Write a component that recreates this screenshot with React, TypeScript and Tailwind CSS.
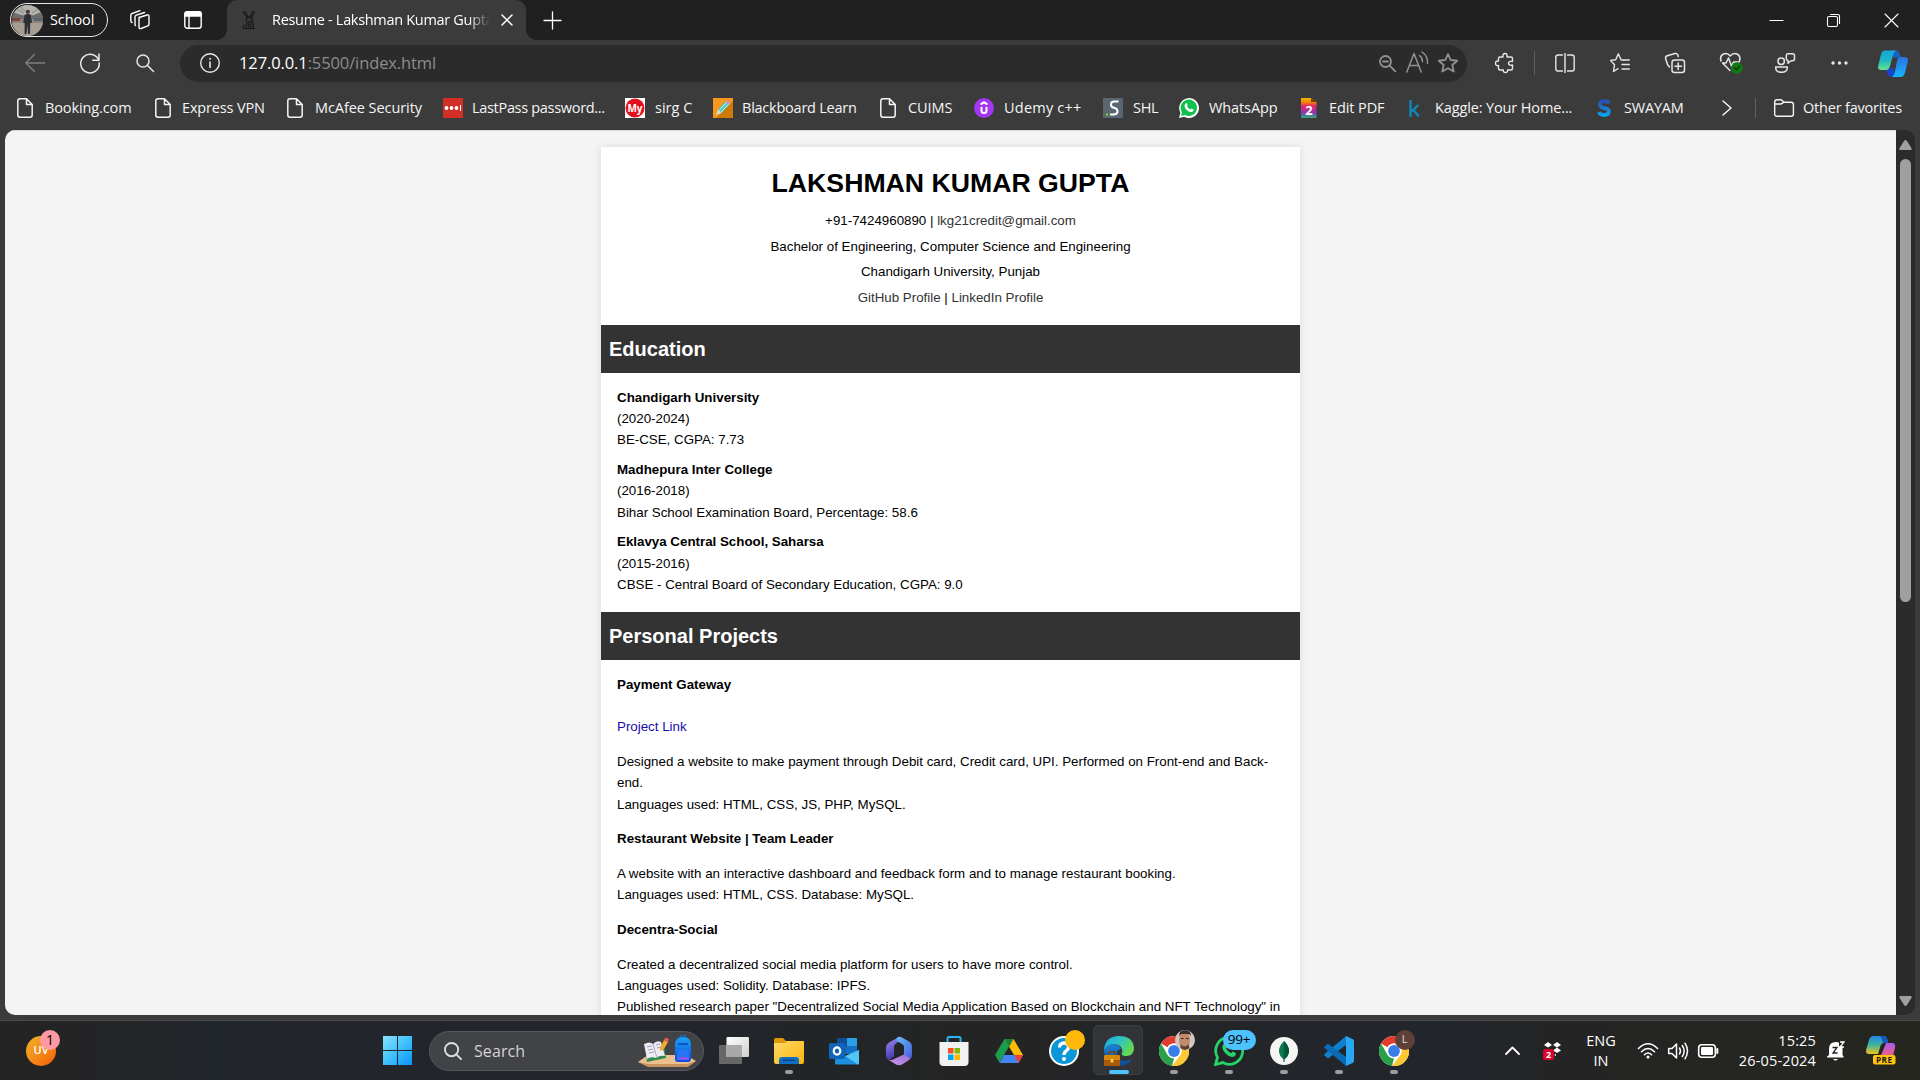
import type { ReactNode } from "react";

const UI = "font-['Open_Sans','Noto_Sans',sans-serif]";

function Ico({ c = "", vb = "0 0 20 20", w = 1.4, children }: { c?: string; vb?: string; w?: number; children: ReactNode }) {
  return (
    <svg className={`block shrink-0 overflow-visible ${c}`} viewBox={vb} fill="none" stroke="currentColor" strokeWidth={w} strokeLinecap="round" strokeLinejoin="round">
      {children}
    </svg>
  );
}

/* ---------- Tab strip ---------- */

function Avatar() {
  return (
    <svg className="block size-[31px] shrink-0" viewBox="0 0 31 31">
      <defs>
        <clipPath id="av"><circle cx="15.5" cy="15.5" r="15.5" /></clipPath>
      </defs>
      <g clipPath="url(#av)">
        <rect width="31" height="31" fill="#8d857a" />
        <rect width="31" height="10" fill="#b4b2ac" />
        <path d="M0 7l12 4v3H0zM31 6l-11 5v3h11z" fill="#6a6d6d" />
        <path d="M3 3l9 5M28 3l-8 5M7 1l6 5" stroke="#7f7f7b" strokeWidth=".8" />
        <rect y="13" width="8" height="3" fill="#823f3b" />
        <rect x="22" y="13" width="9" height="3" fill="#59656b" />
        <path d="M0 18h31v13H0z" fill="#a79d90" />
        <circle cx="15.800" cy="6.800" r="2.100" fill="#4a3a33" />
        <path d="M12.500 10q3.300-2 6.600 0l.8 8h-1.700l-.2 11h-2l-.5-9-1 9h-2l.2-11h-1.500z" fill="#2f3036" />
      </g>
    </svg>
  );
}

function TabStrip() {
  return (
    <div className="flex h-10 w-full shrink-0 items-center bg-[#202020] text-white">
      <div className="ml-[10px] flex h-[34px] w-[98px] shrink-0 items-center rounded-full border-[1.500px] border-[#e8e8e8] pl-px text-[14.500px]">
        <Avatar />
        <span className="ml-[7px] tracking-[-0.1px]">School</span>
      </div>
      <Ico c="ml-[22px] size-5" w={1.4}>
        <path d="M9 7.500L17 5q2-.6 2 1.300v8q0 1.200-1.200 1.600L11 18.500q-2 .5-2-1.300V9q0-1.200 1-1.500M5.500 15.500Q5 15 5 14V7q0-1.400 1.300-1.900L14.500 2.500M2 12.500q-1.200-.5-1.200-1.700V5.500q0-1.500 1.300-2L10 .7" />
      </Ico>
      <Ico c="ml-[34px] h-[18px] w-[18px]" vb="0 0 18 18">
        <rect x=".8" y=".8" width="16.400" height="16.400" rx="2.500" />
        <path d="M1 2.500Q1 1 2.500 1h13Q17 1 17 2.500V5H1z" fill="currentColor" />
        <path d="M5 5v12" />
      </Ico>
      <div className="relative ml-[25px] flex h-10 w-[299px] shrink-0 items-center rounded-t-[10px] bg-[#3b3b3b]">
        <div className="absolute bottom-0 -left-[10px] size-[10px] bg-[radial-gradient(circle_at_0_0,transparent_9.500px,#3b3b3b_10px)]" />
        <div className="absolute -right-[10px] bottom-0 size-[10px] bg-[radial-gradient(circle_at_100%_0,transparent_9.500px,#3b3b3b_10px)]" />
        <Ico c="ml-[15px] h-5 w-[14px] text-[#161616]" vb="0 0 15 20" w={1.100}>
          <path d="M6 8L1.500 2Q2 .2 3.500 1.500L7 7M9 7l2-5.500Q13 0 13 2l-3 6" />
          <ellipse cx="7.800" cy="10" rx="3.500" ry="3" />
          <path d="M6.500 9.700v.3M9.500 9.700v.3M7.300 11.500h1" />
          <path d="M6 12.700q-2.500 3-.5 6.500h6q2-3.500-.5-6.500M3 16q-2 0-2 1.700T3.500 19.200H13" />
          <circle cx="8.500" cy="16" r="1.600" />
        </Ico>
        <div className="ml-[16px] w-[219px] overflow-hidden text-[14.500px] tracking-[-0.31px] whitespace-nowrap [mask-image:linear-gradient(to_right,black_196px,transparent_218px)]">
          Resume - Lakshman Kumar Gupta
        </div>
        <Ico c="ml-[11px] size-[10px]" vb="0 0 10 10" w={1.500}>
          <path d="M0 0l10 10M10 0L0 10" />
        </Ico>
      </div>
      <Ico c="ml-[18px] size-[17px]" vb="0 0 17 17" w={1.300}>
        <path d="M8.500 0v17M0 8.500h17" />
      </Ico>
      <div className="flex-1" />
      <Ico c="size-[13px]" vb="0 0 13 13" w={1.200}><path d="M0 6.500h13" /></Ico>
      <Ico c="ml-[44px] size-[13px]" vb="0 0 13 13" w={1.100}>
        <rect x=".5" y="2.500" width="10" height="10" rx="1.500" />
        <path d="M3.500.5H11q1.500 0 1.500 1.500V9.500" />
      </Ico>
      <Ico c="mr-[22px] ml-[45px] size-[13px]" vb="0 0 13 13" w={1.100}><path d="M0 0l13 13M13 0L0 13" /></Ico>
    </div>
  );
}

/* ---------- Address bar ---------- */

function EdgeCopilot() {
  return (
    <svg className="block h-[27px] w-[30px] shrink-0" viewBox="0 0 30 27">
      <defs>
        <linearGradient id="ec1" x1="0" y1="0" x2="0" y2="1"><stop stopColor="#18a5d8" /><stop offset=".5" stopColor="#1cb7c4" /><stop offset="1" stopColor="#6be08e" /></linearGradient>
        <linearGradient id="ec2" x1="0" y1="0" x2="0" y2="1"><stop stopColor="#2b6fe0" /><stop offset="1" stopColor="#15b9fd" /></linearGradient>
      </defs>
      <path d="M14 .500h4q2.500 0 3.500 3l1.300 4H15z" fill="#1462c8" />
      <path d="M8 19l7-1 3 8.500h-5q-3 0-4-4z" fill="#1546d2" />
      <path d="M7 .500h11q-2 1-3 4.500L12 16q-1 4-4 4H3Q-.8 20 .3 15.500L3 4.500Q4 .500 7 .500z" fill="url(#ec1)" />
      <path d="M21 7h6q4 0 2.800 4.500L27 22.500q-1.200 4.500-4.500 4.500H14q2-1 2.800-4.500L19 11q.8-3 2-4z" fill="url(#ec2)" />
    </svg>
  );
}

function AddressRow() {
  return (
    <div className="flex h-[46px] w-full shrink-0 items-center text-[#e6e6e6]">
      <Ico c="ml-[25px] size-5 text-[#7f7f7f]"><path d="M19.500 10H.7M9.500 1.500L.7 10l8.800 8.500" /></Ico>
      <Ico c="ml-[35px] size-5" w={1.500}><path d="M18.800 7.500A9.300 9.300 0 1 0 19.300 10M19 1v6.300h-6.300" /></Ico>
      <Ico c="ml-[36px] size-[18px]" vb="0 0 18 18" w={1.500}><circle cx="7" cy="7" r="6" /><path d="M11.500 11.500l6 6" /></Ico>
      <div className="ml-[26px] flex h-[37px] w-[1287px] shrink-0 items-center rounded-full bg-[#2b2b2b]">
        <Ico c="ml-5 size-5" w={1.400}>
          <circle cx="10" cy="10" r="9.300" />
          <path d="M10 9v5.500" strokeWidth="1.600" />
          <circle cx="10" cy="5.800" r=".6" fill="currentColor" strokeWidth=".8" />
        </Ico>
        <div className="ml-[19px] pt-px text-[16.500px] tracking-[-0.11px] whitespace-nowrap text-[#8d8d8d]">
          <span className="text-white">127.0.0.1</span>:5500/index.html
        </div>
        <div className="flex-1" />
        <div className="flex items-center text-[#929292]">
          <Ico c="size-[17px]" vb="0 0 17 17" w={1.800}><circle cx="6.500" cy="6.500" r="5.500" /><path d="M4 6.500h5M10.700 10.700l5.600 5.600" /></Ico>
          <Ico c="ml-[10px] h-[22px] w-[23px] -translate-y-px" vb="0 0 23 22" w={1.500}>
            <path d="M.8 21L8 2.500 15.200 21M3.500 14.500h9M13.500 4.500q3 2 3 6M16 1q6 4 5.500 11.500" />
          </Ico>
          <Ico c="mr-[9px] ml-[9px] size-5" w={1.800}><path d="M10 1l2.700 6 6.500.7-4.900 4.300 1.400 6.500L10 15.200 4.300 18.500l1.400-6.500L.8 7.700l6.500-.7z" /></Ico>
        </div>
      </div>
      <Ico c="ml-[28px] size-5"><path d="M5 4h3q-.6-3.500 2-3.500T12 4h4q1.500 0 1.500 1.500v3Q13.500 7.800 13.500 10.300T17.500 12v3.500q0 1.500-1.500 1.500h-3.500q.5 2.500-2 2.500T8.300 17H5q-1.500 0-1.500-1.500v-3Q.5 13 .5 10.300T3.500 8V5.500Q3.500 4 5 4z" /></Ico>
      <div className="ml-[19px] h-6 w-px shrink-0 bg-[#5e5e5e]" />
      <Ico c="ml-[20px] size-5"><path d="M7.500 2H3Q.8 2 .8 4.200v11.600Q.8 18 3 18h4.500M12.500 2H17q2.200 0 2.200 2.200v11.600Q19.200 18 17 18h-4.500M10 .500v19" /></Ico>
      <Ico c="ml-[35px] size-5">
        <path d="M14 7.300l-3-.5L8.300.8 5.700 6.800l-5.200.6 4 4.400-1 6.700 4.500-2.800M12 7h7.300M12 11.500h7.300M12 16h7.300" />
      </Ico>
      <Ico c="ml-[35px] size-5" w={1.500}>
        <rect x="7" y="7" width="12.500" height="12.500" rx="2.500" />
        <path d="M13.200 10v6.500M10 13.200h6.500M4.500 14L2.500 11.500.6 5.500Q.2 3.500 2.200 2.700L10 .500q2-.4 2.800 1.300l.5 1.700" />
      </Ico>
      <Ico c="ml-[35px] size-[22px]" vb="0 0 22 22" w={1.500}>
        <path d="M10 18.500L2.500 11H6l2.500-5 3 8 2-4h5.500M1 9Q-.5 4 3.500 2 7.500.500 10.200 4 13 .500 17 2q4 2 2.500 7" />
        <circle cx="17" cy="16" r="5.800" fill="#107c10" stroke="none" />
        <path d="M14.500 16l1.800 1.800 3.300-3.300" stroke="#0b3b0b" />
      </Ico>
      <Ico c="ml-[33px] size-5" w={1.500}>
        <circle cx="6.200" cy="8.200" r="3.200" />
        <path d="M.7 14h11.600q.3 5.300-5.800 5.300T.7 14zM12.500.7h5q2 0 2 2v3q0 2-2 2h-1.500l-3 2.600V7.500q-1.700-.3-1.700-1.800v-3q0-2 1.200-2z" />
      </Ico>
      <Ico c="ml-[36px] h-1 w-[17px]" vb="0 0 17 4">
        <g fill="currentColor" stroke="none"><circle cx="2" cy="2" r="1.700" /><circle cx="8.500" cy="2" r="1.700" /><circle cx="15" cy="2" r="1.700" /></g>
      </Ico>
      <div className="ml-[30px]"><EdgeCopilot /></div>
    </div>
  );
}

/* ---------- Bookmarks ---------- */

const FileIcon = () => (
  <Ico c="h-5 w-4" vb="0 0 16 20" w={1.500}>
    <path d="M9.500.8H3Q.8.800.8 3v14Q.8 19.200 3 19.200h10q2.200 0 2.200-2.200V6.500zM9.500.8v5.700h5.700" />
  </Ico>
);

const LastPass = () => (
  <svg className="block size-5" viewBox="0 0 20 20"><rect width="20" height="20" fill="#d32d27" /><g fill="#fff"><circle cx="3.500" cy="10" r="1.900" /><circle cx="8.500" cy="10" r="1.900" /><circle cx="13.500" cy="10" r="1.900" /><rect x="17" y="7" width="1" height="6" /></g></svg>
);
const MyLogo = () => (
  <svg className="block size-5" viewBox="0 0 20 20"><rect width="20" height="20" fill="#fff" /><circle cx="10" cy="10" r="9.500" fill="#e3101c" /><text x="10" y="14" fontSize="10" fontWeight="700" textAnchor="middle" fill="#fff">My</text></svg>
);
const Blackboard = () => (
  <svg className="block size-5" viewBox="0 0 20 20"><rect width="20" height="20" fill="#f7971d" /><path d="M20 3v17H3z" fill="#cf7a05" /><path d="M3 17l2-5.500L14 2l3.500 3.500-9 9.500z" fill="#45c8c4" /><path d="M14 2l3.500 3.500L16 7l-3.500-3.500z" fill="#e58ab0" /><path d="M6 12.500l7.500-8M8 14.300l7.500-8" stroke="#d8f2e8" /><path d="M3 17l2-5.500 3.500 3.500z" fill="#f1d9a8" /></svg>
);
const Udemy = () => (
  <svg className="block size-5" viewBox="0 0 20 20"><circle cx="10" cy="10" r="10" fill="#a435f0" /><path d="M6.500 6.500L10 4.300l3.500 2.200M7.500 9v3.500q0 2.500 2.500 2.500t2.500-2.500V9" fill="none" stroke="#fff" strokeWidth="2" /></svg>
);
const Shl = () => (
  <svg className="block size-5" viewBox="0 0 20 20"><rect width="20" height="20" fill="#5b6770" /><path d="M15.500 3.500H11q-3 0-3 3T11 9.800t3.500 3.200-3.500 3.500H7" fill="none" stroke="#fff" strokeWidth="2" /><circle cx="4" cy="16.500" r="1.200" fill="#7ed321" /></svg>
);
const WhatsAppMark = () => (
  <svg className="block size-5" viewBox="0 0 20 20"><path d="M0 20l1.400-5.200A9.900 9.900 0 1 1 5.300 18.700z" fill="#fff" /><path d="M2 18l1-3.700A8.200 8.200 0 1 1 6 17z" fill="#10c14c" /><path d="M7 5.300q.6-.5 1 .3l.7 1.600q.1.400-.7 1.400 1.200 2.200 3.400 3 .8-1.200 1.200-1l1.800.9q.4.200.1 1.100-.6 1.500-2.500 1.500-2.500-.2-4.500-2.400T5.500 8q0-1.700 1.500-2.700z" fill="#fff" /></svg>
);
const EditPdf = () => (
  <svg className="block h-5 w-4" viewBox="0 0 16 20">
    <defs><linearGradient id="pdf" x2="0" y2="1"><stop stopColor="#f5b400" /><stop offset=".2" stopColor="#f28a00" /><stop offset=".4" stopColor="#e5256e" /><stop offset=".75" stopColor="#8a3ab9" /><stop offset="1" stopColor="#23b573" /></linearGradient></defs>
    <path d="M0 0h10l5.500 4v16H0z" fill="url(#pdf)" /><path d="M10 0v4h5.500z" fill="#7a3b05" />
    <text x="8" y="16.500" fontSize="13" fontWeight="700" textAnchor="middle" fill="#fff">2</text>
  </svg>
);
const Kaggle = () => (
  <svg className="block h-[17px] w-[11px]" viewBox="0 0 11 17" fill="none" stroke="#0f88b8" strokeWidth="2.400"><path d="M1.500 0v17M9.300 5L2.500 11.500M4.500 10l5.300 6.500" /></svg>
);
const Swayam = () => (
  <svg className="block h-[18px] w-[14px]" viewBox="0 0 14 18" fill="none" strokeWidth="3.800">
    <defs><linearGradient id="sw" x2="0" y2="1"><stop stopColor="#2d4db2" /><stop offset="1" stopColor="#0fa0ea" /></linearGradient></defs>
    <path d="M12 4.500Q11 2 7.500 2 3 2 3 5.200T7.500 9t4.300 3.700T7.200 16Q3 16 2 13" stroke="url(#sw)" />
  </svg>
);

type Mark = { label: string; icon: ReactNode; slot: string; iconW: string; track: string };
const marks: Mark[] = [
  { label: "Booking.com", icon: <FileIcon />, slot: "w-[138px]", iconW: "w-[28px]", track: "tracking-[-0.12px]" },
  { label: "Express VPN", icon: <FileIcon />, slot: "w-[132px]", iconW: "w-[27px]", track: "tracking-[-0.15px]" },
  { label: "McAfee Security", icon: <FileIcon />, slot: "w-[156px]", iconW: "w-[28px]", track: "tracking-[-0.07px]" },
  { label: "LastPass password...", icon: <LastPass />, slot: "w-[182px]", iconW: "w-[29px]", track: "tracking-[-0.31px]" },
  { label: "sirg C", icon: <MyLogo />, slot: "w-[88px]", iconW: "w-[30px]", track: "tracking-[0px]" },
  { label: "Blackboard Learn", icon: <Blackboard />, slot: "w-[167px]", iconW: "w-[29px]", track: "tracking-[-0.24px]" },
  { label: "CUIMS", icon: <FileIcon />, slot: "w-[94px]", iconW: "w-[28px]", track: "tracking-[-0.1px]" },
  { label: "Udemy c++", icon: <Udemy />, slot: "w-[129px]", iconW: "w-[30px]", track: "tracking-[0.22px]" },
  { label: "SHL", icon: <Shl />, slot: "w-[76px]", iconW: "w-[30px]", track: "tracking-[-0.3px]" },
  { label: "WhatsApp", icon: <WhatsAppMark />, slot: "w-[122px]", iconW: "w-[30px]", track: "tracking-[-0.1px]" },
  { label: "Edit PDF", icon: <EditPdf />, slot: "w-[108px]", iconW: "w-[28px]", track: "tracking-[-0.1px]" },
  { label: "Kaggle: Your Home...", icon: <Kaggle />, slot: "w-[188px]", iconW: "w-[26px]", track: "tracking-[-0.13px]" },
  { label: "SWAYAM", icon: <Swayam />, slot: "w-[126px]", iconW: "w-[27px]", track: "tracking-[-0.2px]" },
];

function Bookmarks() {
  return (
    <div className="flex h-[44px] w-full shrink-0 items-center pl-[17px] text-[14.500px] whitespace-nowrap text-[#f5f5f5]">
      {marks.map((m) => (
        <div key={m.label} className={`flex shrink-0 items-center ${m.slot}`}>
          <div className={`shrink-0 ${m.iconW}`}>{m.icon}</div>
          <span className={m.track}>{m.label}</span>
        </div>
      ))}
      <Ico c="h-[14px] w-2" vb="0 0 8 14" w={1.500}><path d="M0 0l8 7L0 14" /></Ico>
      <div className="ml-[24px] h-5 w-px shrink-0 bg-[#626262]" />
      <Ico c="ml-[18px] h-[18px] w-5" vb="0 0 20 18" w={1.400}>
        <path d="M.7 5V3Q.7.700 3 .7h3.500q1 0 1.700.8l1.700 1.700h7.300q2.200 0 2.200 2.200v9.500q0 2.300-2.200 2.300H3Q.7 17.200.7 15zM.7 5h5.800q1 0 1.700-.7l1.700-1.100" />
      </Ico>
      <span className="ml-[9px] tracking-[-0.2px]">Other favorites</span>
    </div>
  );
}

/* ---------- Resume page ---------- */

const BarTitle = ({ children }: { children: ReactNode }) => (
  <h2 className="bg-[#333] p-[8px] text-[20px] leading-[32px] font-bold text-white">{children}</h2>
);

const schools = [
  ["Chandigarh University", "(2020-2024)", "BE-CSE, CGPA: 7.73"],
  ["Madhepura Inter College", "(2016-2018)", "Bihar School Examination Board, Percentage: 58.6"],
  ["Eklavya Central School, Saharsa", "(2015-2016)", "CBSE - Central Board of Secondary Education, CGPA: 9.0"],
];

function Resume() {
  return (
    <article className="mt-[16px] ml-[596px] h-[1200px] w-[699px] shrink-0 bg-white font-['Liberation_Sans',Arial,sans-serif] text-[13.330px] leading-[21.330px] text-black shadow-[0_0_8.300px_rgba(0,0,0,0.1)]">
      <header className="h-[178px] pt-[14.200px] text-center text-black">
        <h1 className="text-[26.670px] leading-[45px] font-bold">LAKSHMAN KUMAR GUPTA</h1>
        <div className="mt-[4.300px] flex flex-col gap-[4.170px]">
          <p>+91-7424960890 | <a className="text-[#333]">lkg21credit@gmail.com</a></p>
          <p>Bachelor of Engineering, Computer Science and Engineering</p>
          <p>Chandigarh University, Punjab</p>
          <p><a className="text-[#333]">GitHub Profile</a> | <a className="text-[#333]">LinkedIn Profile</a></p>
        </div>
      </header>
      <BarTitle>Education</BarTitle>
      <ul className="flex h-[239px] flex-col gap-[8.330px] px-[16px] pt-[13.600px]">
        {schools.map(([name, years, detail]) => (
          <li key={name}>
            <strong>{name}</strong>
            <p>{years}</p>
            <p>{detail}</p>
          </li>
        ))}
      </ul>
      <BarTitle>Personal Projects</BarTitle>
      <div className="flex flex-col gap-[13.330px] px-[16px] pt-[13.700px]">
        <p><strong>Payment Gateway</strong><br /><br /><a className="text-[#1a0dab]">Project Link</a></p>
        <p>Designed a website to make payment through Debit card, Credit card, UPI. Performed on Front-end and Back-<br />end.<br />Languages used: HTML, CSS, JS, PHP, MySQL.</p>
        <p><strong>Restaurant Website | Team Leader</strong></p>
        <p>A website with an interactive dashboard and feedback form and to manage restaurant booking.<br />Languages used: HTML, CSS. Database: MySQL.</p>
        <p><strong>Decentra-Social</strong></p>
        <p className="whitespace-nowrap">Created a decentralized social media platform for users to have more control.<br />Languages used: Solidity. Database: IPFS.<br />Published research paper "Decentralized Social Media Application Based on Blockchain and NFT Technology" in</p>
      </div>
    </article>
  );
}

function Viewport() {
  return (
    <div className="flex h-[890px] w-full shrink-0 px-[5px] pb-[5px]">
      <div className="flex h-[885px] w-[1910px] overflow-hidden rounded-[10px]">
        <div className="h-full w-[1891px] shrink-0 overflow-hidden border-t border-[#d8d8d8] bg-[#f4f4f4]"><div className="flex"><Resume /></div></div>
        <div className="flex h-full flex-1 flex-col items-center bg-[#2b2b2b] pt-[10px] pb-[9px]">
          <svg className="block h-[10px] w-[13px] shrink-0" viewBox="0 0 13 10"><path d="M6.500 0q.8 0 1.300.8L12.700 8.500q.3 1.500-1 1.500H1.300Q0 10 .3 8.500L5.200.8Q5.700 0 6.500 0z" fill="#9f9f9f" /></svg>
          <div className="mt-[9px] h-[443px] w-[11px] shrink-0 rounded-full bg-[#9f9f9f]" />
          <div className="flex-1" />
          <svg className="block h-[10px] w-[13px] shrink-0 rotate-180" viewBox="0 0 13 10"><path d="M6.500 0q.8 0 1.300.8L12.700 8.500q.3 1.500-1 1.500H1.300Q0 10 .3 8.500L5.200.8Q5.700 0 6.500 0z" fill="#9f9f9f" /></svg>
        </div>
      </div>
    </div>
  );
}

/* ---------- Taskbar ---------- */

function TaskApp({ children, run = true, active = false }: { children: ReactNode; run?: boolean; active?: boolean }) {
  return (
    <div className="relative flex h-[59px] w-[55px] shrink-0 items-center justify-center">
      {active && <div className="absolute top-[4px] left-[2px] h-[50px] w-[50px] rounded-[5px] border border-[#3b3d40] bg-[#32343a]" />}
      <div className="relative">{children}</div>
      {active && <div className="absolute top-[49px] left-[18px] h-1 w-5 rounded-full bg-[#4cc2ff]" />}
      {run && !active && <div className="absolute top-[49px] left-[24px] h-1 w-2 rounded-full bg-[#9b9c9f]" />}
    </div>
  );
}

const TaskView = () => (
  <svg className="block size-[30px]" viewBox="0 0 30 30"><defs><linearGradient id="tv" x1="0" y1="0" x2="1" y2="1"><stop stopColor="#fff" /><stop offset="1" stopColor="#d0d0d0" /></linearGradient></defs><rect y="9" width="23" height="19" rx="1" fill="#676767" /><rect x="7.500" y="1" width="22.500" height="20" rx="1" fill="url(#tv)" /><rect x="7.500" y="9" width="15.500" height="12" fill="#a9a9a9" /></svg>
);
const Explorer = () => (
  <svg className="block size-[30px]" viewBox="0 0 30 30"><defs><linearGradient id="fe" x1="0" y1="0" x2="1" y2="1"><stop stopColor="#ffd968" /><stop offset="1" stopColor="#f9b50e" /></linearGradient></defs><path d="M0 4q0-2 1.500-2H9l3 3h18v6H0z" fill="#dd9a07" /><path d="M0 7h11l2-2h15.500Q30 5 30 6.500V26q0 2-2 2H2q-2 0-2-2z" fill="url(#fe)" /><path d="M5 28v-4q0-3 3-3h14q3 0 3 3v4z" fill="#0f6fc5" /><path d="M9 24.300h12" stroke="#0b4178" strokeWidth="1.500" /></svg>
);
const Outlook = () => (
  <svg className="block size-[30px]" viewBox="0 0 30 30"><path d="M8 2h20v16H8z" fill="#1566b8" /><path d="M8 2h10v8H8z" fill="#0f4f97" /><path d="M18 2h10v8H18z" fill="#2b9fe4" /><path d="M18 10h10v8H18z" fill="#1271c4" /><path d="M6 15l12 6 12-7v13.500q0 1-1 1H7q-1 0-1-1z" fill="#1c8fde" /><path d="M30 14v13.500q0 1-1 1L16 20z" fill="#50c7f3" /><rect y="7" width="16" height="16" rx="1.500" fill="#0f64b8" /><ellipse cx="8" cy="15" rx="3.300" ry="3.700" fill="none" stroke="#fff" strokeWidth="2.200" /></svg>
);
const M365 = () => (
  <svg className="block size-[30px]" viewBox="0 0 30 30"><defs><linearGradient id="m1" x1="0" y1="0" x2=".3" y2="1"><stop stopColor="#a08cf5" /><stop offset="1" stopColor="#463ab0" /></linearGradient><linearGradient id="m2" x1="0" y1="0" x2="1" y2="1"><stop stopColor="#69b9f7" /><stop offset=".6" stopColor="#5285ea" /><stop offset="1" stopColor="#4a55d0" /></linearGradient><linearGradient id="m3" x1="0" y1="1" x2="1" y2="0"><stop stopColor="#c79aea" /><stop offset="1" stopColor="#9a6ed6" /></linearGradient></defs>
    <path d="M15 1L5 6.500Q2 8.500 2 11.500v8q0 3 2.500 4.500l5.500-3.500V11q0-3 5-5.500z" fill="url(#m1)" /><path d="M14 1Q16 .500 18 1.500l7.500 4.300Q28 7.500 28 11v9q0 2-2 3l-6-4v-8q0-2-2-3l-5-3q-1.500-2.500 1-4z" fill="url(#m2)" /><path d="M4 23.500q3.500 1.500 7-1l9-4 6.500 4q-1 1.500-2.500 2.300L18 28.500q-3 1.500-6 0z" fill="url(#m3)" /></svg>
);
const Store = () => (
  <svg className="block size-[30px]" viewBox="0 0 30 30"><path d="M8.500 8V2.500Q8.500 1 10 1h10q1.500 0 1.500 1.500V8" fill="none" stroke="#29b6f0" strokeWidth="2" /><path d="M.5 6h29v20q0 4-4 4h-21q-4 0-4-4z" fill="#f1f1f1" /><path d="M9 12h5.500v5.500H9z" fill="#f25022" /><path d="M15.500 12H21v5.500h-5.500z" fill="#7fba00" /><path d="M9 18.500h5.500V24H9z" fill="#00a4ef" /><path d="M15.500 18.500H21V24h-5.500z" fill="#ffb900" /></svg>
);
const Drive = () => (
  <svg className="block size-[28px]" viewBox="0 0 28 28"><path d="M9.500 2h9L9 18l-4.500 7.500L0 18z" fill="#1e9c4d" /><path d="M9.500 2h9L28 18h-9z" fill="#fbbc05" /><path d="M9.500 2h9L14 10z" fill="#188038" /><path d="M9 18h19l-4.500 8h-19z" fill="#4285f4" /><path d="M19 18h9l-4.500 8z" fill="#ea4335" /></svg>
);
const Help = () => (
  <div className="relative">
    <svg className="block size-[30px]" viewBox="0 0 30 30"><circle cx="15" cy="15" r="15" fill="#fff" /><circle cx="15" cy="15" r="13" fill="#0a96d7" /><path d="M10.500 11.500Q10.500 7 15 7t4.500 4.200q0 2-2.300 3.600T15 19" fill="none" stroke="#fff" strokeWidth="3.300" /><circle cx="15" cy="23" r="2" fill="#fff" /></svg>
    <div className="absolute -top-[6px] left-[16px] size-5 rounded-full bg-[#ffb90a]" />
  </div>
);
const Edge = () => (
  <svg className="block size-[30px]" viewBox="0 0 30 30"><defs><linearGradient id="e1" x2="1" y2=".5"><stop stopColor="#1da5e0" /><stop offset=".5" stopColor="#2dc3c9" /><stop offset="1" stopColor="#62d94f" /></linearGradient><linearGradient id="e2" x2="0" y2="1"><stop stopColor="#1b86d6" /><stop offset="1" stopColor="#0c4a93" /></linearGradient></defs>
    <path d="M0 15Q1 8 8 8q7 0 9 5-5 1-4 6 1 6 8 6 4 0 7-2-4 7-13 7Q2 29 0 15z" fill="url(#e2)" /><path d="M0 14Q1 0 15 0t15 12q0 7-7 8-5 0-5.500-2 1.500-2 .5-5Q16 8 9 8 3 8 0 14z" fill="url(#e1)" />
    <rect y="19" width="16" height="11" rx="1" fill="#d9870c" /><path d="M5 19v-2q0-1 1-1h4q1 0 1 1v2" fill="none" stroke="#7c3e08" strokeWidth="1.500" /><path d="M0 24h16v6H0z" fill="#a85a0a" /><rect x="6.700" y="23" width="2.600" height="3.500" fill="#ffd34a" /></svg>
);
const Chrome = () => (
  <svg className="block size-[30px]" viewBox="0 0 30 30"><circle cx="15" cy="15" r="15" fill="#fff" /><path d="M15 0A15 15 0 0 1 28 7.500H15A7.500 7.500 0 0 0 8.500 11.200L2 7.500A15 15 0 0 1 15 0z" fill="#e33b2e" /><path d="M2 7.500L8.500 18.800A7.500 7.500 0 0 0 15 22.500L13 30A15 15 0 0 1 2 7.500z" fill="#2c9f4b" /><path d="M28 7.500A15 15 0 0 1 13 30l8.500-11.200A7.500 7.500 0 0 0 21.500 11.200L20 7.500z" fill="#fcc934" /><path d="M8.500 18.800L15 22.500l-4.500 7Z" fill="#2c9f4b" /><circle cx="15" cy="15" r="7.500" fill="#fff" /><circle cx="15" cy="15" r="5.900" fill="#3a7de9" /></svg>
);
const FaceBadge = () => (
  <svg className="absolute -top-[6px] left-[16px] block size-5" viewBox="0 0 20 20"><clipPath id="fb"><circle cx="10" cy="10" r="10" /></clipPath><g clipPath="url(#fb)"><rect width="20" height="20" fill="#cfc9c2" /><ellipse cx="9.500" cy="10" rx="5.500" ry="8" fill="#c08a6b" /><path d="M4 6Q4 0 10 0t6 6l-2-2H6z" fill="#3b2d27" /><path d="M5.500 14q4 5 8 0l1 4-5 3-4-3z" fill="#5b4037" /><path d="M6 8.500h2.500M11 8.500h2.500" stroke="#2b211d" /></g></svg>
);
const WhatsAppApp = () => (
  <div className="relative">
    <svg className="block size-[30px]" viewBox="0 0 30 30"><path d="M1.500 28.500l2-7A13.500 13.500 0 1 1 8.700 26.600z" fill="none" stroke="#25d366" strokeWidth="2.800" /><path d="M10.500 7.500q1-.7 1.600.6l1 2.400q.2.600-1 2 1.700 3.300 5 4.700 1.300-1.800 1.900-1.600l2.700 1.400q.6.400.1 1.700-.9 2.200-3.700 2.200-3.800-.3-6.800-3.600t-3.100-6.200q0-2.200 2.300-3.600z" fill="#25d366" /></svg>
    <div className="absolute -top-[6px] left-[9px] flex h-5 w-[33px] items-center justify-center rounded-full bg-[#4cc2ff] text-[13.500px] tracking-[-0.2px] text-black">99+</div>
  </div>
);
const Mongo = () => (
  <svg className="block size-[28px]" viewBox="0 0 28 28"><circle cx="14" cy="14" r="14" fill="#f5f6f4" /><path d="M14 4q5 5 5 10t-5 8.500Q9 19 9 14t5-10z" fill="#0c7a50" /><path d="M14 4q5 5 5 10t-5 8.500z" fill="#04573a" /><path d="M14 10v15" stroke="#1b5c43" strokeWidth="1.200" /></svg>
);
const VsCode = () => (
  <svg className="block size-[30px]" viewBox="0 0 30 30"><path d="M22 0v9L4 22.500l-3.500-3q-.8-.8 0-1.500z" fill="#1080cc" /><path d="M22 30v-9L4 7.500l-3.500 3q-.8.800 0 1.500z" fill="#0a6ab6" /><path d="M22 0l7 3.300q1 .5 1 1.700v20q0 1.200-1 1.700L22 30z" fill="#2aa7f2" /></svg>
);

function SearchPill() {
  return (
    <div className="ml-[17px] flex h-10 w-[275px] shrink-0 items-center rounded-full border border-[#56585b] bg-[#414347]">
      <Ico c="ml-[14px] size-[18px] text-[#dcdddf]" vb="0 0 19 19" w={2}><circle cx="8" cy="8" r="7" /><path d="M13 13l5 5" /></Ico>
      <span className="ml-[12px] text-[16px] tracking-[0.1px] text-[#d3d4d5]">Search</span>
      <svg className="mr-[7px] ml-auto block h-[32px] w-[58px]" viewBox="0 0 58 32">
        <defs><linearGradient id="bp" x2="0" y2="1"><stop stopColor="#1ba3f5" /><stop offset="1" stopColor="#0a4be0" /></linearGradient></defs>
        <path d="M0 27l10-7h38l10 6-8 5H10z" fill="#ecc08c" /><path d="M0 27l10 2h39l9-3-8 6H10z" fill="#c9935e" />
        <path d="M7 10l19 0 2 13-19 4z" fill="#2f8b4e" /><path d="M6 9q6-3 9 0 4-4 8-2l4 14q-5-1-9 2-5-2-9 1z" fill="#eeebf5" /><path d="M15 9l4 14" stroke="#a9a4c0" /><path d="M9 12l5-1M10 15l5-1M18 10l4-1M19 13l4-1M11 18l5-1" stroke="#8d89a8" strokeWidth=".8" />
        <path d="M22 13l4-8 4 2-4 7-4 2z" fill="#f7a829" /><path d="M26 5l1.500-2.500 3.500 1.500-1 3z" fill="#ee5a4f" />
        <path d="M42 3q0-3 3-3t3 3" stroke="#1466d8" fill="none" strokeWidth="1.500" /><path d="M37 10q0-8 8-8t8 8v14q0 3-3 3H40q-3 0-3-3z" fill="url(#bp)" /><path d="M39 20q0-6 6-6t6 6v5H39z" fill="#2776f5" /><path d="M40 9h10" stroke="#0c3fb5" strokeWidth="1.500" /><path d="M40 23.500h11" stroke="#a24bf0" strokeWidth="2" />
      </svg>
    </div>
  );
}

function TrayCopilot() {
  return (
    <svg className="block h-[29px] w-[30px]" viewBox="0 0 30 29">
      <defs><linearGradient id="t1" x2="0" y2="1"><stop stopColor="#2186e8" /><stop offset=".5" stopColor="#3fb59c" /><stop offset="1" stopColor="#f0c319" /></linearGradient><linearGradient id="t2" x2="0" y2="1"><stop stopColor="#a65bf0" /><stop offset="1" stopColor="#f2607e" /></linearGradient></defs>
      <path d="M8 0h10q3 0 4 7h-4q-2.500 0-3.500 3l-2.500 8H3Q-1 18 .4 13L3 4Q4 0 8 0z" fill="url(#t1)" /><path d="M14 0h4q3 0 4 7h-5q-1-5-3-7z" fill="#1756c9" /><path d="M20 7h6q4 0 3 5l-2 8H13q2 0 3-3z" fill="url(#t2)" />
      <rect x="7" y="19" width="22.500" height="9.500" rx="2" fill="#ffc20e" /><text x="18.300" y="26.700" fontSize="8.200" fontWeight="700" letterSpacing=".5" textAnchor="middle" fill="#161616">PRE</text>
    </svg>
  );
}

function Taskbar() {
  return (
    <div className="flex h-[60px] w-full shrink-0 items-center border-t border-[#48494b] bg-[linear-gradient(90deg,#252323_0px,#21262b_220px,#22252b_340px,#22252b_700px,#222527_820px,#242424_980px,#22262d_1440px,#242424_1560px,#262620_1920px)] text-white">
      <div className="relative ml-[26px] size-[30px] shrink-0">
        <div className="flex size-[30px] items-center justify-center rounded-full bg-linear-to-br from-[#f0b429] to-[#f35b04] text-[11px] font-semibold">UV</div>
        <div className="absolute -top-[6px] left-[14px] flex size-5 items-center justify-center rounded-full bg-[#ff99a4] text-[14px] text-black">1</div>
      </div>
      <svg className="ml-[327px] block size-[29px] shrink-0" viewBox="0 0 29 29"><defs><linearGradient id="win" x2="1" y2="1"><stop stopColor="#8be2ff" /><stop offset=".5" stopColor="#3fc1fb" /><stop offset="1" stopColor="#0b92fa" /></linearGradient></defs><path d="M0 0h14v14H0zM15 0h14v14H15zM0 15h14v14H0zM15 15h14v14H15z" fill="url(#win)" /></svg>
      <SearchPill />
      <div className="ml-[2px] flex">
        <TaskApp run={false}><TaskView /></TaskApp>
        <TaskApp><Explorer /></TaskApp>
        <TaskApp run={false}><Outlook /></TaskApp>
        <TaskApp run={false}><M365 /></TaskApp>
        <TaskApp run={false}><Store /></TaskApp>
        <TaskApp run={false}><Drive /></TaskApp>
        <TaskApp run={false}><Help /></TaskApp>
        <TaskApp active><Edge /></TaskApp>
        <TaskApp><Chrome /><FaceBadge /></TaskApp>
        <TaskApp><WhatsAppApp /></TaskApp>
        <TaskApp><Mongo /></TaskApp>
        <TaskApp><VsCode /></TaskApp>
        <TaskApp>
          <Chrome />
          <div className="absolute -top-[6px] left-[16px] flex size-5 items-center justify-center rounded-full bg-[#5d4037] text-[11px] text-[#e3dcd9]">L</div>
        </TaskApp>
      </div>
      <div className="flex-1" />
      <Ico c="h-[7px] w-[13px]" vb="0 0 13 7" w={1.800}><path d="M0 7l6.500-6.500L13 7" /></Ico>
      <svg className="ml-[23px] block size-5 shrink-0" viewBox="0 0 20 20"><g fill="#fff"><path d="M2 4l4-3 4 3-4 2.500zM11 4l4-3 4 3-4 2.500zM11 9.500l4-3 4 3-4 2.500zM12 14l2-1v2z" /></g><rect x="1" y="8" width="11" height="11" rx="2" fill="#d9042b" /><text x="6.500" y="16.800" fontSize="9" fontWeight="700" textAnchor="middle" fill="#fff">2</text></svg>
      <div className="ml-[20px] flex w-[38px] flex-col items-center text-[14.500px] leading-5"><span>ENG</span><span>IN</span></div>
      <Ico c="ml-[18px] h-[16px] w-5" vb="0 0 20 16" w={1.600}><path d="M.5 5.500q9.500-9.500 19 0M3.500 8.700q6.500-6.500 13 0M6.500 11.700q3.500-3.500 7 0" /><circle cx="10" cy="14" r="1.500" fill="currentColor" stroke="none" /></Ico>
      <Ico c="ml-[10px] h-[18px] w-5" vb="0 0 20 18" w={1.500}><path d="M.7 6.500H4L8.500 2v14L4 11.500H.7zM11.500 6q2 3 0 6M14.300 3.500q3.700 5.500 0 11M17 1.200q5 7.800 0 15.600" /></Ico>
      <Ico c="ml-[10px] h-[14px] w-5" vb="0 0 20 14" w={1.600}><rect x=".7" y=".7" width="16.600" height="12.600" rx="3" /><rect x="3" y="3" width="12" height="8" rx="1.200" fill="currentColor" stroke="none" /><path d="M19.300 5v4" strokeWidth="2" /></Ico>
      <div className="ml-[18px] flex w-[80px] flex-col items-end text-[14.500px] leading-5 tracking-[0.15px] whitespace-nowrap"><span>15:25</span><span>26-05-2024</span></div>
      <svg className="ml-[11px] block h-[20px] w-[18px] shrink-0" viewBox="0 0 18 20"><path d="M2 14V8Q2 1 9 1q2 0 3 .7V5l3.500 1v8l1 1.500v1H0v-1z" fill="#fff" /><path d="M6 18q2.500 3 5 0z" fill="#fff" /><path d="M5.500 6.500h4.500L6 12h4.500" fill="none" stroke="#222" strokeWidth="1.300" /><path d="M13 1h4l-4 5h4" fill="none" stroke="#fff" strokeWidth="1.300" /></svg>
      <div className="mr-[24px] ml-[21px]"><TrayCopilot /></div>
    </div>
  );
}

export default function App() {
  return (
    <div className={`flex h-[1080px] w-[1920px] flex-col overflow-hidden bg-[#3b3b3b] ${UI}`}>
      <TabStrip />
      <AddressRow />
      <Bookmarks />
      <Viewport />
      <Taskbar />
    </div>
  );
}
